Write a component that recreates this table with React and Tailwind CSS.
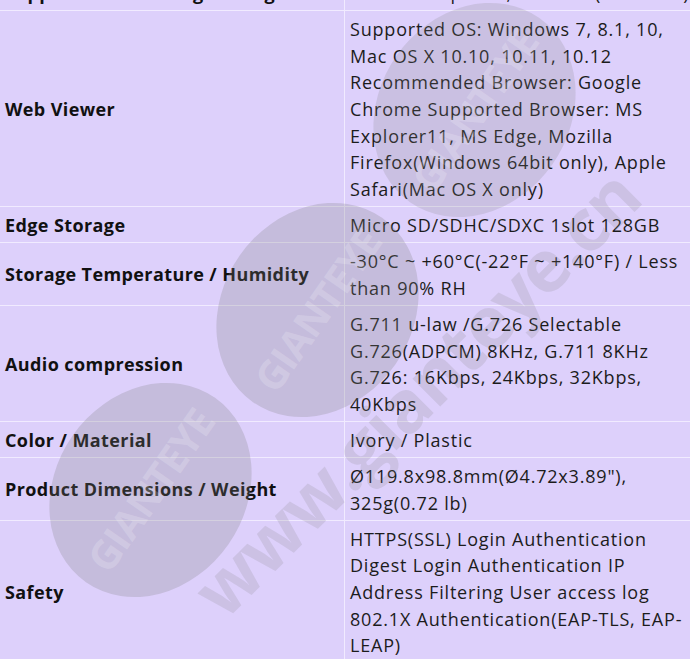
import React from "react"

const rows = [
  {
    label: "Supported Streaming Settings",
    lines: ["Internet Explorer, Chrome (Windows)"],
  },
  {
    label: "Web Viewer",
    lines: [
      "Supported OS: Windows 7, 8.1, 10,",
      "Mac OS X 10.10, 10.11, 10.12",
      "Recommended Browser: Google",
      "Chrome Supported Browser: MS",
      "Explorer11, MS Edge, Mozilla",
      "Firefox(Windows 64bit only), Apple",
      "Safari(Mac OS X only)",
    ],
  },
  { label: "Edge Storage", lines: ["Micro SD/SDHC/SDXC 1slot 128GB"] },
  {
    label: "Storage Temperature / Humidity",
    lines: ["-30°C ~ +60°C(-22°F ~ +140°F) / Less", "than 90% RH"],
  },
  {
    label: "Audio compression",
    lines: [
      "G.711 u-law /G.726 Selectable",
      "G.726(ADPCM) 8KHz, G.711 8KHz",
      "G.726: 16Kbps, 24Kbps, 32Kbps,",
      "40Kbps",
    ],
  },
  { label: "Color / Material", lines: ["Ivory / Plastic"] },
  {
    label: "Product Dimensions / Weight",
    lines: ["Ø119.8x98.8mm(Ø4.72x3.89\"),", "325g(0.72 lb)"],
  },
  {
    label: "Safety",
    lines: [
      "HTTPS(SSL) Login Authentication",
      "Digest Login Authentication IP",
      "Address Filtering User access log",
      "802.1X Authentication(EAP-TLS, EAP-",
      "LEAP)",
    ],
  },
]

const Watermark = () => (
  <div className="pointer-events-none absolute inset-0 overflow-hidden">
    {/* round logos */}
    <div className="absolute left-[362px] top-[15px] flex h-[190px] w-[225px] -rotate-[55deg] items-center justify-center rounded-[50%] bg-[#808080]/20">
      <span className="text-[40px] font-bold tracking-tight text-white/20">GIANTEYE</span>
    </div>
    <div className="absolute left-[205px] top-[215px] flex h-[190px] w-[225px] -rotate-[55deg] items-center justify-center rounded-[50%] bg-[#808080]/25">
      <span className="text-[40px] font-bold tracking-tight text-white/20">GIANTEYE</span>
    </div>
    <div className="absolute left-[38px] top-[395px] flex h-[190px] w-[225px] -rotate-[55deg] items-center justify-center rounded-[50%] bg-[#808080]/25">
      <span className="text-[40px] font-bold tracking-tight text-white/20">GIANTEYE</span>
    </div>
    {/* site address */}
    <div className="absolute left-[95px] top-[356px] w-[640px] -rotate-[45deg] whitespace-nowrap text-center text-[72px] font-bold leading-none tracking-tight text-[#808080]/[0.18]">
      www.gianteye.cn
    </div>
  </div>
)

export default function App() {
  return (
    <div
      className="relative h-[659px] w-[690px] overflow-hidden bg-[#ddd0fb] text-[18px] leading-[26.6px] text-[#1c1c1c]"
      style={{ fontFamily: '"Open Sans", "Noto Sans", sans-serif' }}
    >
      <div className="-mt-[25px] grid w-[700px] grid-cols-[345px_355px]">
        {rows.map((row) => (
          <React.Fragment key={row.label}>
            <div className="flex items-center border-b border-r border-[#f1ebff] px-[5px] pt-[5px] pb-[3.6px] font-bold tracking-[0.4px] text-[#111]">
              {row.label}
            </div>
            <div className="whitespace-nowrap border-b border-[#f1ebff] px-[5px] pt-[5px] pb-[3.6px] tracking-[0.8px]">
              {row.lines.map((line) => (
                <div key={line}>{line}</div>
              ))}
            </div>
          </React.Fragment>
        ))}
      </div>
      <Watermark />
    </div>
  )
}
